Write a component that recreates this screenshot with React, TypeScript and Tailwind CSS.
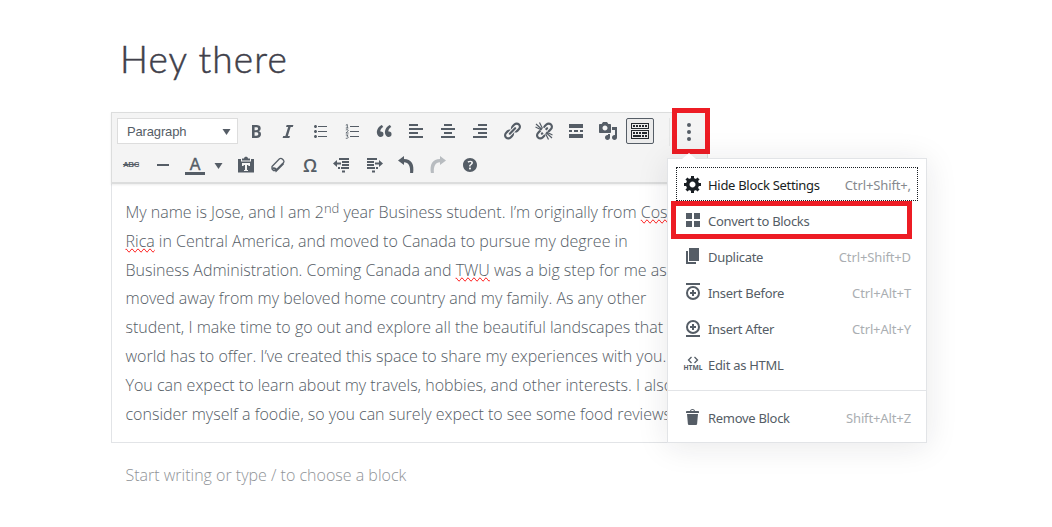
import React from "react";

const paths = {
  bold: "M6 4v13h4.54c1.37 0 2.46-.33 3.26-1 .8-.66 1.2-1.58 1.2-2.77 0-.84-.17-1.51-.51-2.01s-.9-.85-1.67-1.03v-.09c.57-.1 1.02-.4 1.36-.9s.51-1.13.51-1.91c0-1.14-.39-1.98-1.17-2.5C12.75 4.26 11.5 4 9.78 4H6zm2.57 5.15V6.26h1.36c.73 0 1.27.11 1.61.32.34.22.51.58.51 1.07 0 .54-.16.92-.47 1.15s-.82.35-1.51.35h-1.5zm0 2.19h1.6c1.44 0 2.16.53 2.16 1.61 0 .6-.17 1.05-.51 1.34s-.86.43-1.57.43H8.57v-3.38z",
  italic: "M14.78 6h-2.13l-2.8 9h2.12l-.62 2H4.6l.62-2h2.14l2.8-9H8.03l.62-2h6.75z",
  ul: "M5.5 7C4.67 7 4 6.33 4 5.5 4 4.68 4.67 4 5.5 4 6.32 4 7 4.68 7 5.5 7 6.33 6.32 7 5.5 7zM8 5h9v1H8V5zm-2.5 7c-.83 0-1.5-.67-1.5-1.5C4 9.68 4.67 9 5.5 9c.82 0 1.5.68 1.5 1.5 0 .83-.68 1.5-1.5 1.5zM8 10h9v1H8v-1zm-2.5 7c-.83 0-1.5-.67-1.5-1.5 0-.82.67-1.5 1.5-1.5.82 0 1.5.68 1.5 1.5 0 .83-.68 1.5-1.5 1.5zM8 15h9v1H8v-1z",
  quote: "M9.49 13.22c0-.74-.2-1.38-.61-1.9-.62-.78-1.83-.88-2.53-.72-.29-1.65 1.11-3.75 2.92-4.65L7.88 4c-2.73 1.3-5.42 4.28-4.96 8.05C3.21 14.43 4.59 16 6.54 16c.85 0 1.56-.25 2.12-.75s.83-1.18.83-2.03zm8.05 0c0-.74-.2-1.38-.61-1.9-.63-.78-1.83-.88-2.53-.72-.29-1.65 1.11-3.75 2.92-4.65L15.93 4c-2.73 1.3-5.41 4.28-4.95 8.05.29 2.38 1.66 3.95 3.61 3.95.85 0 1.56-.25 2.12-.75s.83-1.18.83-2.03z",
  left: "M12 5V3H3v2h9zm5 4V7H3v2h14zm-5 4v-2H3v2h9zm5 4v-2H3v2h14z",
  center: "M14 5V3H6v2h8zm3 4V7H3v2h14zm-3 4v-2H6v2h8zm3 4v-2H3v2h14z",
  right: "M17 5V3H8v2h9zm0 4V7H3v2h14zm0 4v-2H8v2h9zm0 4v-2H3v2h14z",
  link: "M17.74 2.76c1.68 1.69 1.68 4.41 0 6.1l-1.53 1.52c-1.12 1.12-2.7 1.47-4.14 1.09l2.62-2.61.76-.77.76-.76c.84-.84.84-2.2 0-3.04-.84-.85-2.2-.85-3.04 0l-.77.76-3.38 3.38c-.37-1.44-.02-3.02 1.1-4.14l1.52-1.53c1.69-1.68 4.42-1.68 6.1 0zM8.59 13.43l5.34-5.34c.42-.42.42-1.1 0-1.52-.44-.43-1.13-.39-1.53 0l-5.33 5.34c-.42.42-.42 1.1 0 1.52.44.43 1.13.39 1.52 0zm-.76 2.29l4.14-4.15c.38 1.44.03 3.02-1.09 4.14l-1.52 1.53c-1.69 1.68-4.41 1.68-6.1 0-1.68-1.68-1.68-4.42 0-6.1l1.53-1.52c1.12-1.12 2.7-1.47 4.14-1.1l-4.14 4.15c-.85.84-.85 2.2 0 3.05.84.84 2.2.84 3.04 0z",
  more: "M17 7V3H3v4h14zM6 11V9H3v2h3zm6 0V9H8v2h4zm5 0V9h-3v2h3zm0 6v-4H3v4h14z",
  media: "M13 11V4c0-.55-.45-1-1-1h-1.67L9 1H5L3.67 3H2c-.55 0-1 .45-1 1v7c0 .55.45 1 1 1h10c.55 0 1-.45 1-1zM7 4.5c1.38 0 2.5 1.12 2.5 2.5S8.38 9.5 7 9.5 4.5 8.38 4.5 7 5.62 4.5 7 4.5zM14 6h5v10.5c0 1.38-1.12 2.5-2.5 2.5S14 17.88 14 16.5s1.12-2.5 2.5-2.5c.17 0 .34.02.5.05V9h-3V6zm-4 8.05V13h2v3.5c0 1.38-1.12 2.5-2.5 2.5S7 17.88 7 16.5 8.12 14 9.5 14c.17 0 .34.02.5.05z",
  sink: "M19 2v6H1V2h18zm-1 5V3H2v4h16zM5 4v2H3V4h2zm3 0v2H6V4h2zm3 0v2H9V4h2zm3 0v2h-2V4h2zm3 0v2h-2V4h2zm2 5v9H1V9h18zm-1 8v-7H2v7h16zM5 11v2H3v-2h2zm3 0v2H6v-2h2zm3 0v2H9v-2h2zm6 0v2h-5v-2h5zm-6 3v2H3v-2h8zm3 0v2h-2v-2h2zm3 0v2h-2v-2h2z",
  help: "M17 10c0-3.87-3.14-7-7-7-3.87 0-7 3.13-7 7s3.13 7 7 7c3.86 0 7-3.13 7-7zm-6.3 1.48H9.14v-.43c0-.38.08-.7.24-.98s.46-.57.88-.89c.41-.29.68-.53.81-.71.14-.18.2-.39.2-.62 0-.25-.09-.44-.28-.58-.19-.13-.45-.19-.79-.19-.58 0-1.25.19-2 .57l-.64-1.28c.87-.49 1.8-.74 2.77-.74.81 0 1.45.2 1.92.58.48.39.71.91.71 1.55 0 .43-.09.8-.29 1.11-.19.32-.57.67-1.11 1.06-.38.28-.61.49-.71.63-.1.15-.15.34-.15.57v.35zm-1.47 2.74c-.18-.17-.27-.42-.27-.73 0-.33.08-.58.26-.75s.43-.25.77-.25c.32 0 .57.09.75.26s.27.42.27.74c0 .3-.09.55-.27.72-.18.18-.43.27-.75.27-.33 0-.58-.09-.76-.26z",
  grid: "M9 9V3H3v6h6zm8 0V3h-6v6h6zm-8 8v-6H3v6h6zm8 0v-6h-6v6h6z",
  gear: "M18 12h-2.18c-.17.7-.44 1.35-.81 1.93l1.54 1.54-2.1 2.1-1.54-1.54c-.58.36-1.23.63-1.91.79V19H8v-2.18c-.68-.16-1.33-.43-1.91-.79l-1.54 1.54-2.12-2.12 1.54-1.54c-.36-.58-.63-1.23-.79-1.91H1V9.03h2.17c.16-.7.44-1.35.8-1.94L2.43 5.55l2.1-2.1 1.54 1.54c.58-.37 1.24-.64 1.93-.81V2h3v2.18c.68.16 1.33.43 1.91.79l1.54-1.54 2.12 2.12-1.54 1.54c.36.59.64 1.24.8 1.94H18V12zm-8.5 1.5c1.66 0 3-1.34 3-3s-1.34-3-3-3-3 1.34-3 3 1.34 3 3 3z",
  duplicate: "M6 15V2h10v13H6zm-1 1h8v2H3V5h2v11z",
  trash: "M12 4h3c.6 0 1 .4 1 1v1H3V5c0-.6.5-1 1-1h3c.2-1.1 1.3-2 2.5-2s2.3.9 2.5 2zM8 4h3c-.2-.6-.9-1-1.5-1S8.2 3.4 8 4zM4 7h11l-.9 10.1c0 .5-.5.9-1 .9H5.9c-.5 0-.9-.4-1-.9L4 7z",
  undo: "M8 1 2 5.500l6 4.500V7.200c4.500.2 6.600 3.300 6.100 10.800h3C18.500 9 15.500 4.200 8 3.900z",
  redo: "M12 1l6 4.500-6 4.500V7.200c-4.500.2-6.600 3.300-6.100 10.800h-3C1.500 9 4.500 4.200 12 3.900z",
  outdent: "M7 3h10v2H7zM10 6h7v2h-7zM10 9h7v2h-7zM9 12h8v2H9zM10 15.500h3v2h-3zM1 8.500l4-3.500v2.500h4v2H5V12zM6 12h2v2H6z",
  indent: "M3 3h10v2H3zM3 6h7v2H3zM3 9h7v2H3zM3 12h8v2H3zM8 15.500h3v2H8zM19 8.500 15 5v2.500h-4v2h4V12zM12 12h2v2h-2z",
  hr: "M4 9h12v2H4z",
  caret: "M6.500 8h8l-4 6z",
};

type Name = keyof typeof paths;

const Icon = ({ name, className = "" }: { name: Name; className?: string }) => (
  <svg className={`block h-5 w-5 shrink-0 ${className}`} viewBox="0 0 20 20" fill="currentColor">
    <path d={paths[name]} />
  </svg>
);

const Drawing = ({ children }: { children: React.ReactNode }) => (
  <svg className="block h-5 w-5 shrink-0" viewBox="0 0 20 20" fill="none" stroke="currentColor">
    {children}
  </svg>
);

const Cell = ({ children, className = "w-8" }: { children: React.ReactNode; className?: string }) => (
  <button className={`flex h-[26px] items-center justify-center ${className}`}>{children}</button>
);

const Numbered = () => (
  <Drawing>
    <path d="M8 5.500h9M8 10.500h9M8 15.500h9" />
    <path d="M3.800 4.200 5.300 3.500V7M3.800 7h2.600M3.800 9c2-1 3 0 2 1.200L3.900 12h2.700M3.800 14h2.300l-1.200 1.200c2 .2 1.500 2.100 0 2.100H3.800" strokeWidth=".9" />
  </Drawing>
);

const Unlink = () => (
  <svg className="block h-5 w-5 shrink-0" viewBox="0 0 20 20">
    <path d={paths.link} fill="currentColor" />
    <path d="M4 4 16 16" stroke="#f4f4f4" strokeWidth="4" />
    <path d="m2 3 6 5.500M5.500 1.500l3 6M1.500 6l6 3M12 11.500l6 5.500M11.500 12.500l3 6M12.500 11l6 3" stroke="currentColor" strokeWidth="1.200" />
  </svg>
);

const Paste = () => (
  <svg className="block h-5 w-5 shrink-0" viewBox="0 0 20 20">
    <path d="M2 4h3v2.500h10V4h3v13.500H2zM6 5.500V3.500h2C8 1 12 1 12 3.500h2v2z" fill="currentColor" />
    <path d="M6 8h8v3h-1.500l-.3-1H11v5h1v1H8v-1h1v-5H7.800l-.3 1H6z" fill="#f5f5f5" />
  </svg>
);

const Eraser = () => (
  <Drawing>
    <path d="m4 11.500 7.500-7.700q1.500-1 2.800.2l1.200 1.200q1 1.200 0 2.600l-7.500 7.700H5.500L4 14z" strokeWidth="1.300" />
    <path d="M4.300 13.500c2-.5 3.500 0 4 2l7-7" strokeWidth="2" />
  </Drawing>
);

const InsertIcon = ({ after = false }: { after?: boolean }) => (
  <Drawing>
    <path d={after ? "M3 18h14" : "M3 2h14"} strokeWidth="2" />
    <g transform={after ? "translate(0 -2)" : undefined}>
      <circle cx="10" cy="11" r="6" strokeWidth="2" />
      <path d="M10 8v6M7 11h6" strokeWidth="2" />
    </g>
  </Drawing>
);

const HtmlIcon = () => (
  <svg className="block h-5 w-5 shrink-0 overflow-visible" viewBox="0 0 20 20">
    <path d="m8.500 3-3 3 3 3M11.500 3l3 3-3 3" fill="none" stroke="currentColor" strokeWidth="1.300" />
    <text x="10" y="15.500" textAnchor="middle" textLength="19" lengthAdjust="spacingAndGlyphs" className="fill-current font-['Open_Sans',sans-serif] text-[6.500px] font-bold">
      HTML
    </text>
  </svg>
);

type ItemProps = { icon: React.ReactNode; label: string; keys?: string; active?: boolean };

const MenuItem = ({ icon, label, keys, active }: ItemProps) => (
  <button
    className={`flex h-9 w-full items-center pr-[7px] pl-[7px] text-[13px] ${
      active ? "text-[#191e23]" : "text-[#555d66]"
    }`}
  >
    <span className="mb-[2px]">{icon}</span>
    <span className="mt-[2px] ml-[5px] tracking-[-0.300px] whitespace-nowrap">{label}</span>
    <span className={`mt-[2px] ml-auto tracking-[-0.120px] whitespace-nowrap ${active ? "text-[#85898e]" : "text-[#aaaeb2]"}`}>{keys}</span>
  </button>
);

const Misspelled = ({ children }: { children: React.ReactNode }) => (
  <span className="[text-decoration-line:spelling-error]">{children}</span>
);

export default function App() {
  return (
    <main className="relative h-[527px] w-[1052px] overflow-hidden bg-white pt-[36px] pl-[111px]">
      <h1 className="ml-[9px] h-[76px] font-[Lato,sans-serif] text-[37px] leading-[46px] font-light tracking-[1.150px] text-[#40404a] [-webkit-text-stroke:0.5px_currentColor]">
        Hey there
      </h1>

      <section className="h-[331px] w-[597px]">
        <div className="flex">
          <div className="flex h-[72px] w-[558px] flex-col border-t border-b-2 border-l border-[#dcdddd] bg-[#f4f4f4] pt-[5px] text-[#555d66] shadow-[0_1px_2px_rgba(0,0,0,0.08)]">
            <div className="flex h-[34px] items-start pl-[5px]">
              <div className="flex h-[26px] w-[121px] items-center justify-between border border-[#dddddd] bg-white pr-px pl-[9px] font-['Liberation_Sans',sans-serif] text-[13px] tracking-[-0.150px]">
                <span className="mt-px">Paragraph</span>
                <Icon name="caret" />
              </div>
              <div className="ml-[2px] flex">
                <Cell><Icon name="bold" /></Cell>
                <Cell><Icon name="italic" /></Cell>
                <Cell><Icon name="ul" /></Cell>
                <Cell><Numbered /></Cell>
                <Cell><Icon name="quote" /></Cell>
                <Cell><Icon name="left" /></Cell>
                <Cell><Icon name="center" /></Cell>
                <Cell><Icon name="right" /></Cell>
                <Cell><Icon name="link" /></Cell>
                <Cell><Unlink /></Cell>
                <Cell><Icon name="more" /></Cell>
                <Cell><Icon name="media" /></Cell>
                <Cell className="ml-[2px] w-7 rounded-[2px] border border-[#555d66] bg-[#ebebeb] text-[#23282d]"><Icon name="sink" /></Cell>
              </div>
            </div>
            <div className="flex pl-[3px]">
              <Cell>
                <span className="font-['Liberation_Sans',sans-serif] text-[8px] font-bold tracking-[-0.400px] line-through">ABC</span>
              </Cell>
              <Cell><Icon name="hr" /></Cell>
              <Cell>
                <span className="mt-[2px] flex h-[18px] w-5 justify-center border-b-[3px] border-current font-['Liberation_Sans',sans-serif] text-[16px] leading-[15px] [-webkit-text-stroke:0.4px_currentColor]">A</span>
              </Cell>
              <Cell className="w-[19px]"><Icon name="caret" className="-ml-[6px]" /></Cell>
              <Cell><Paste /></Cell>
              <Cell><Eraser /></Cell>
              <Cell><span className="font-['Open_Sans',sans-serif] text-[18px] font-semibold">Ω</span></Cell>
              <Cell><Icon name="outdent" /></Cell>
              <Cell><Icon name="indent" /></Cell>
              <Cell><Icon name="undo" /></Cell>
              <Cell><Icon name="redo" className="text-[#b8bcc0]" /></Cell>
              <Cell><Icon name="help" /></Cell>
            </div>
          </div>
          <div className="h-[72px] w-[39px] border-t border-r border-b-2 border-[#dcdddd] bg-[#f4f4f4]">
            <div className="mt-[5px] h-[28px] border-l border-[#e5e6e6]" />
          </div>
        </div>
        <div className="h-[259px] border border-t-0 border-[#e2e4e7] pt-[14px] pl-[13.500px] font-['Open_Sans',sans-serif] text-[16px] leading-[28.800px] font-light whitespace-nowrap text-[#555d66]">
          <p>My name is Jose, and I am 2<sup className="relative -top-[5px] text-[13px] leading-none align-baseline">nd</sup> year Business student. I’m originally from <Misspelled>Costa</Misspelled></p>
          <p><Misspelled>Rica</Misspelled> in Central America, and moved to Canada to pursue my degree in</p>
          <p>Business Administration. Coming Canada and <Misspelled>TWU</Misspelled> was a big step for me as I</p>
          <p>moved away from my beloved home country and my family. As any other</p>
          <p>student, I make time to go out and explore all the beautiful landscapes that the</p>
          <p>world has to offer. I’ve created this space to share my experiences with you.</p>
          <p>You can expect to learn about my travels, hobbies, and other interests. I also</p>
          <p>consider myself a foodie, so you can surely expect to see some food reviews.</p>
        </div>
      </section>

      <p className="mt-[18px] ml-[14.500px] font-['Open_Sans',sans-serif] text-[16px] leading-[28.800px] font-light text-[#8f9397]">
        Start writing or type / to choose a block
      </p>

      <div className="absolute top-[108px] left-[672px] flex h-[46px] w-[38px] flex-col items-center justify-center gap-[3px] border-[5px] border-[#ed1c24] bg-[#f4f4f4] pt-[2px] pr-[4px]">
        <i className="h-1 w-1 rounded-full bg-[#555d66]" />
        <i className="h-1 w-1 rounded-full bg-[#555d66]" />
        <i className="h-1 w-1 rounded-full bg-[#555d66]" />
      </div>

      <div className="absolute top-[158px] left-[667px] flex h-[285px] w-[260px] flex-col border border-[#e2e4e7] bg-white font-['Noto_Sans',sans-serif] shadow-[0_3px_30px_rgba(25,30,35,0.1)]">
        <svg className="absolute -top-[6px] left-[14px] h-[7px] w-[14px]" viewBox="0 0 14 7">
          <path d="m0 6 7-6 7 6v1H0z" fill="#fff" />
        </svg>
        <div className="flex h-[231px] flex-col px-[8px] pt-[8px]">
          <MenuItem icon={<Icon name="gear" />} label="Hide Block Settings" keys="Ctrl+Shift+," active />
          <MenuItem icon={<Icon name="grid" />} label="Convert to Blocks" />
          <MenuItem icon={<Icon name="duplicate" />} label="Duplicate" keys="Ctrl+Shift+D" />
          <MenuItem icon={<InsertIcon />} label="Insert Before" keys="Ctrl+Alt+T" />
          <MenuItem icon={<InsertIcon after />} label="Insert After" keys="Ctrl+Alt+Y" />
          <MenuItem icon={<HtmlIcon />} label="Edit as HTML" />
        </div>
        <div className="border-t border-[#e2e4e7] px-[8px] pt-[9px]">
          <MenuItem icon={<Icon name="trash" />} label="Remove Block" keys="Shift+Alt+Z" />
        </div>
        <div className="absolute top-[8px] left-[8px] h-[34px] w-[242px] border border-dotted border-[#191e23]" />
        <div className="absolute top-[42px] left-[3px] h-[38px] w-[241px] border-[5px] border-[#ed1c24]" />
      </div>
    </main>
  );
}
